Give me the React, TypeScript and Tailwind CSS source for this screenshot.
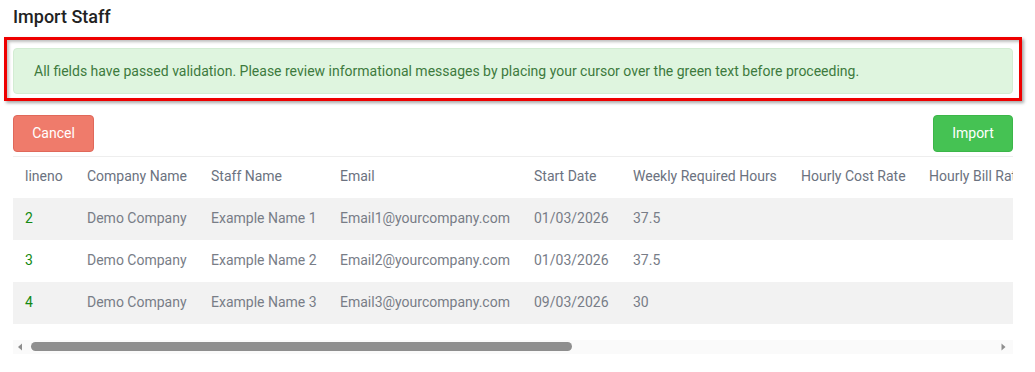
import React from 'react';

const COLUMNS = [
  { label: 'lineno', width: 'w-[62px]' },
  { label: 'Company Name', width: 'w-[124px]' },
  { label: 'Staff Name', width: 'w-[129px]' },
  { label: 'Email', width: 'w-[194px]' },
  { label: 'Start Date', width: 'w-[99px]' },
  { label: 'Weekly Required Hours', width: 'w-[168px]' },
  { label: 'Hourly Cost Rate', width: 'w-[128px]' },
  { label: 'Hourly Bill Rate', width: 'w-[128px]' },
];

const ROWS = [
  { line: '2', company: 'Demo Company', name: 'Example Name 1', email: 'Email1@yourcompany.com', start: '01/03/2026', hours: '37.5' },
  { line: '3', company: 'Demo Company', name: 'Example Name 2', email: 'Email2@yourcompany.com', start: '01/03/2026', hours: '37.5' },
  { line: '4', company: 'Demo Company', name: 'Example Name 3', email: 'Email3@yourcompany.com', start: '09/03/2026', hours: '30' },
];

function Scrollbar() {
  return (
    <div className="mt-[16px] flex h-[14px] items-center bg-[#fafafa]">
      <svg width="18" height="14" viewBox="0 0 18 14" className="shrink-0">
        <path d="M5 7 L9 3.5 L9 10.5 Z" fill="#8e8e8e" />
      </svg>
      <div className="h-[9px] w-[541px] rounded-full bg-[#8e8e8e]" />
      <div className="flex-1" />
      <svg width="18" height="14" viewBox="0 0 18 14" className="shrink-0">
        <path d="M6.5 3.5 L10.5 7 L6.5 10.5 Z" fill="#8e8e8e" />
      </svg>
    </div>
  );
}

export default function App() {
  return (
    <div className="min-h-[372px] bg-white font-['Roboto',sans-serif]">
      <div className="ml-[13px] w-[1000px]">
        <h1 className="pt-[6px] pb-[9px] text-[18px] font-medium leading-[22px] text-[#222]">Import Staff</h1>

        {/* Highlighted validation notice */}
        <div className="-mx-[9px] border-[3px] border-[#ee0000] bg-white px-[6px] pt-[8px] pb-[4px] shadow-[2px_2px_3px_rgba(0,0,0,0.35),inset_2px_2px_3px_rgba(0,0,0,0.25)]">
          <div className="flex h-[46px] items-center rounded-[4px] border border-[#d3ecd3] bg-[#dff5df] pl-[20px] text-[14px] text-[#3d7a3d]">
            All fields have passed validation. Please review informational messages by placing your cursor over the green text before proceeding.
          </div>
        </div>

        <div className="mt-[14px] flex justify-between">
          <button className="h-[37px] w-[81px] rounded-[4px] border border-[#e0685a] bg-[#ef7b6b] text-[14px] text-white">
            Cancel
          </button>
          <button className="h-[37px] w-[80px] rounded-[4px] border border-[#3cb649] bg-[#45c253] text-[14px] text-white">
            Import
          </button>
        </div>

        <div className="mt-[4px] w-[1000px] overflow-hidden">
          <table className="w-[1032px] table-fixed border-collapse text-left text-[14px]">
            <thead>
              <tr className="h-[41px] border-t border-[#eeeeee]">
                {COLUMNS.map((c) => (
                  <th key={c.label} className={`${c.width} whitespace-nowrap px-[12px] pb-[2px] font-normal text-[#6b7280]`}>
                    {c.label}
                  </th>
                ))}
              </tr>
            </thead>
            <tbody>
              {ROWS.map((r, i) => (
                <tr key={r.line} className={`h-[42px] ${i % 2 === 0 ? 'bg-[#f2f2f2]' : 'bg-white'} text-[#787d87]`}>
                  <td className="px-[12px] text-[#138a13]">{r.line}</td>
                  <td className="whitespace-nowrap px-[12px]">{r.company}</td>
                  <td className="whitespace-nowrap px-[12px]">{r.name}</td>
                  <td className="whitespace-nowrap px-[12px]">{r.email}</td>
                  <td className="whitespace-nowrap px-[12px]">{r.start}</td>
                  <td className="px-[12px]">{r.hours}</td>
                  <td className="px-[12px]" />
                  <td className="px-[12px]" />
                </tr>
              ))}
            </tbody>
          </table>
        </div>

        <Scrollbar />
      </div>
    </div>
  );
}
